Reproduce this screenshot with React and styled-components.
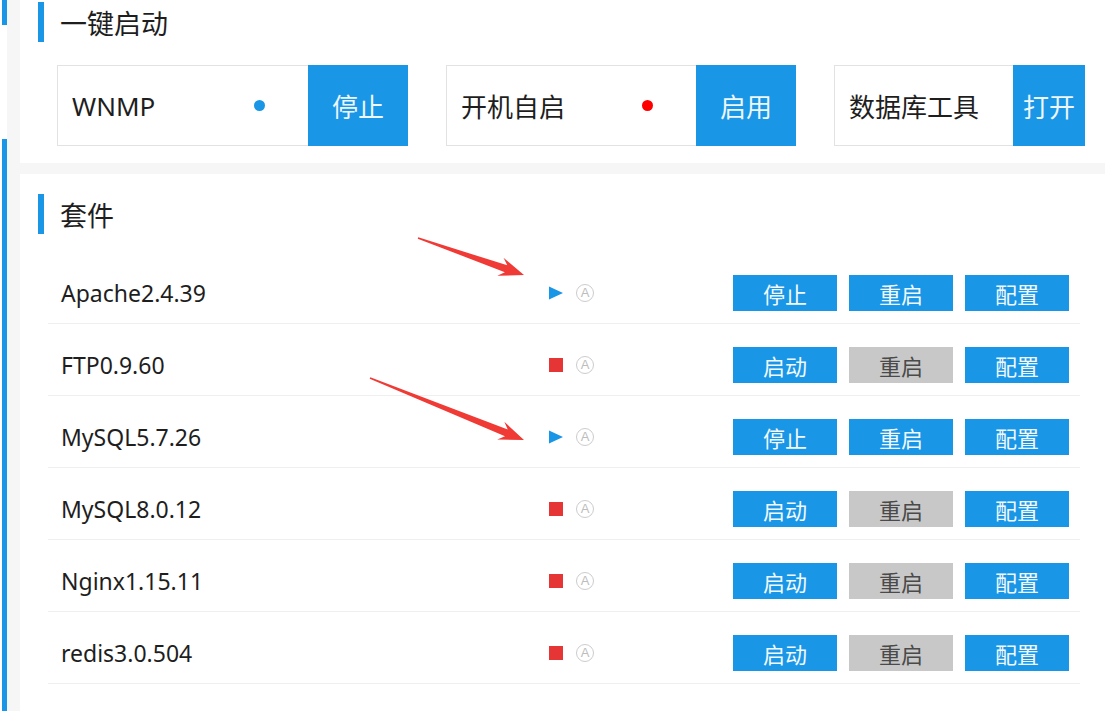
import React from 'react'
import styled, { createGlobalStyle } from 'styled-components'

const BLUE = '#1996e6'

const GlobalStyle = createGlobalStyle`
  html, body {
    margin: 0;
    padding: 0;
    overflow: hidden;
    background: #fff;
    font-family: "Noto Sans", "Noto Sans CJK SC", sans-serif;
  }
  * { box-sizing: border-box; }
`

const Page = styled.div`
  position: relative;
  display: flex;
  width: 1105px;
  height: 711px;
  overflow: hidden;
`

const Rail = styled.div`
  width: 7px;
  padding-left: 2px;
  background: #fff;
  display: flex;
  flex-direction: column;
  gap: 114px;
`

const RailMark = styled.div`
  background: ${BLUE};
  height: ${p => p.$h || 'auto'};
  flex: ${p => (p.$h ? 'none' : '1')};
`

const Main = styled.div`
  flex: 1;
  background: #f6f6f6;
  padding-left: 13px;
  display: flex;
  flex-direction: column;
  gap: 11px;
`

const Panel = styled.section`
  background: #fff;
  padding: ${p => p.$top}px ${p => p.$right}px ${p => p.$bottom}px 18px;
  flex: ${p => (p.$grow ? '1' : 'none')};
`

const Heading = styled.h2`
  margin: 0;
  display: flex;
  align-items: center;
  height: 40px;
  border-left: 6px solid ${BLUE};
  padding-left: 16px;
  font-size: 27px;
  font-weight: 400;
  color: #1e1e1e;
`

const CardRow = styled.div`
  display: flex;
  gap: 38px;
  margin: 23px 0 0 19px;
`

const Card = styled.div`
  display: flex;
  height: 81px;
  width: ${p => (p.$w ? `${p.$w}px` : 'auto')};
  flex: ${p => (p.$w ? 'none' : '1')};
  min-width: 0;
`

const CardLabel = styled.div`
  flex: 1;
  min-width: 0;
  display: flex;
  align-items: center;
  justify-content: space-between;
  padding: 0 ${p => (p.$plain ? 8 : 43)}px 0 14px;
  border: 1px solid #e2e2e2;
  border-right: none;
  font-size: 26px;
  white-space: nowrap;
  color: #1e1e1e;
`

const Dot = styled.span`
  width: 11px;
  height: 11px;
  border-radius: 50%;
  background: ${p => p.$color};
`

const CardButton = styled.button`
  width: ${p => p.$w}px;
  flex: none;
  border: none;
  background: ${BLUE};
  color: #eef7fd;
  font-family: inherit;
  font-size: 26px;
  padding: 0;
  white-space: nowrap;
  cursor: pointer;
`

const List = styled.div`
  margin: 18px 0 0 10px;
`

const Row = styled.div`
  display: flex;
  align-items: center;
  height: 72px;
  padding: 10px 11px 0 13px;
  border-bottom: 1px solid #efefef;
`

const Name = styled.div`
  width: 488px;
  font-size: 23px;
  color: #1e1e1e;
`

const Status = styled.div`
  display: flex;
  align-items: center;
  gap: 13px;
`

const Stopped = styled.span`
  width: 14px;
  height: 14px;
  background: #e53535;
`

const Auto = styled.span`
  flex: none;
  width: 18px;
  height: 18px;
  border: 1px solid #cccccc;
  border-radius: 50%;
  display: flex;
  align-items: center;
  justify-content: center;
  font-family: "Liberation Sans", sans-serif;
  font-size: 13px;
  line-height: 1;
  color: #bdbdbd;
`

const Actions = styled.div`
  margin-left: auto;
  display: flex;
  gap: 12px;
`

const ActionButton = styled.button`
  width: 104px;
  height: 36px;
  border: none;
  padding: 0;
  font-family: inherit;
  font-size: 22px;
  background: ${p => (p.$off ? '#c8c8c8' : BLUE)};
  color: ${p => (p.$off ? '#4a4a4a' : '#f2f9fe')};
`

const Overlay = styled.svg`
  position: absolute;
  left: 0;
  top: 0;
  pointer-events: none;
`

const Running = () => (
  <svg width="14" height="14" viewBox="0 0 14 14">
    <polygon points="0,0.5 14,7 0,13.5" fill={BLUE} />
  </svg>
)

const Arrow = ({ from, to }) => {
  const dx = to[0] - from[0]
  const dy = to[1] - from[1]
  const len = Math.hypot(dx, dy)
  const angle = (Math.atan2(dy, dx) * 180) / Math.PI
  const pts = [
    [0, -0.8], [len - 19, -3.6], [len - 25, -9.5], [len, 0],
    [len - 25, 9.5], [len - 19, 3.6], [0, 0.8],
  ].map(p => p.join(',')).join(' ')
  return (
    <g transform={`translate(${from[0]} ${from[1]}) rotate(${angle})`}>
      <polygon points={pts} fill="#ef3a35" />
    </g>
  )
}

const services = [
  { name: 'Apache2.4.39', on: true },
  { name: 'FTP0.9.60', on: false },
  { name: 'MySQL5.7.26', on: true },
  { name: 'MySQL8.0.12', on: false },
  { name: 'Nginx1.15.11', on: false },
  { name: 'redis3.0.504', on: false },
]

const App = () => {
  return (
    <Page>
      <GlobalStyle />
      <Rail>
        <RailMark $h="25px" />
        <RailMark />
      </Rail>
      <Main>
        <Panel $top={2} $right={20} $bottom={17}>
          <Heading>一键启动</Heading>
          <CardRow>
            <Card $w={351}>
              <CardLabel>WNMP<Dot $color={BLUE} /></CardLabel>
              <CardButton $w={100}>停止</CardButton>
            </Card>
            <Card $w={350}>
              <CardLabel>开机自启<Dot $color="#ff0000" /></CardLabel>
              <CardButton $w={100}>启用</CardButton>
            </Card>
            <Card>
              <CardLabel $plain>数据库工具</CardLabel>
              <CardButton $w={72}>打开</CardButton>
            </Card>
          </CardRow>
        </Panel>
        <Panel $top={20} $right={25} $bottom={0} $grow>
          <Heading>套件</Heading>
          <List>
            {services.map(s => (
              <Row key={s.name}>
                <Name>{s.name}</Name>
                <Status>
                  {s.on ? <Running /> : <Stopped />}
                  <Auto>A</Auto>
                </Status>
                <Actions>
                  <ActionButton>{s.on ? '停止' : '启动'}</ActionButton>
                  <ActionButton $off={!s.on}>重启</ActionButton>
                  <ActionButton>配置</ActionButton>
                </Actions>
              </Row>
            ))}
          </List>
        </Panel>
      </Main>
      <Overlay width="1105" height="711">
        <Arrow from={[418, 238]} to={[524, 275]} />
        <Arrow from={[370, 378]} to={[524, 440]} />
      </Overlay>
    </Page>
  )
}

export default App
